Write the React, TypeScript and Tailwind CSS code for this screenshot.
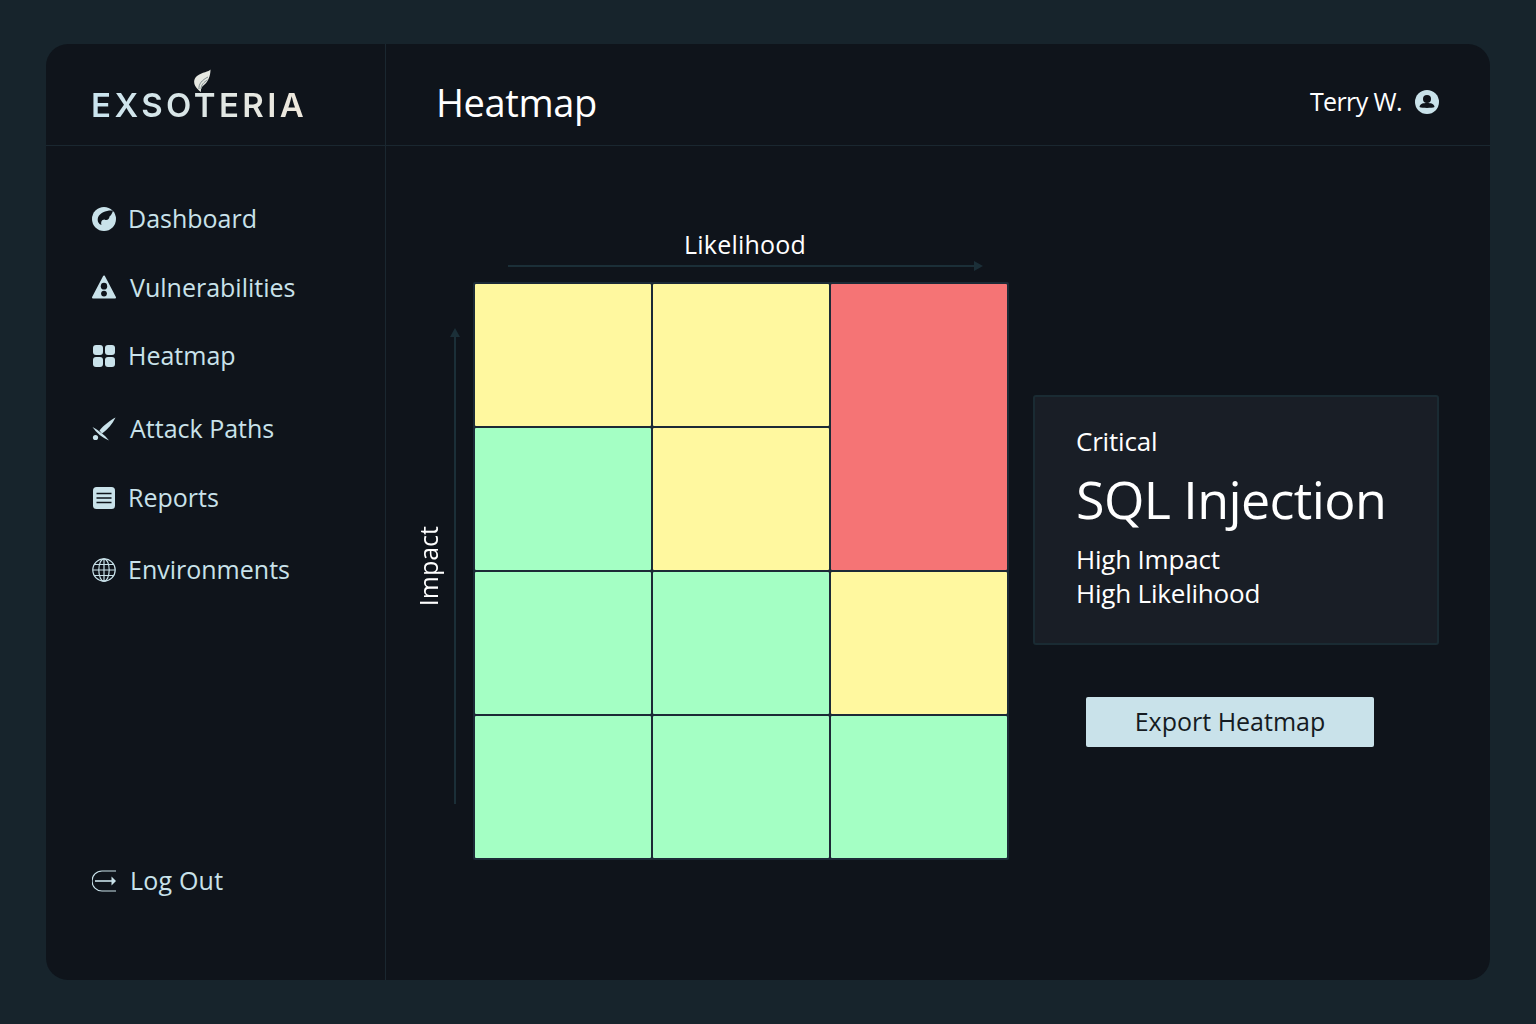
import { ReactNode } from "react";

const ICE = "#c9e2ea";
const DARK = "#0f141b";

function DashIcon() {
  return (
    <svg width="24" height="24" viewBox="0 0 24 24">
      <circle cx="12" cy="12" r="12" fill={ICE} />
      <path d="M21 3.5 C15 3 8 5 6 10.5 C5 14 6.5 17 9.5 18 C8.5 15.5 9.5 12.5 12.5 12.5 C15 14 17.5 12 17.5 9.5 C19 8.5 20.5 6 21 3.5 Z" fill={DARK} />
    </svg>
  );
}

function WarnIcon() {
  return (
    <svg width="24" height="24" viewBox="0 0 24 24" className="-mt-[2px]">
      <path d="M12 1.5 L23 22.5 H1 Z" fill={ICE} stroke={ICE} strokeWidth="2" strokeLinejoin="round" />
      <ellipse cx="12" cy="11.2" rx="3.2" ry="3.4" fill={DARK} />
      <circle cx="12" cy="18.6" r="2.9" fill={DARK} />
    </svg>
  );
}

function GridIcon() {
  return (
    <svg width="24" height="24" viewBox="0 0 24 24" fill={ICE}>
      <rect x="1" y="1" width="10" height="10" rx="3" />
      <rect x="13" y="1" width="10" height="10" rx="3" />
      <rect x="1" y="13" width="10" height="10" rx="3" />
      <rect x="13" y="13" width="10" height="10" rx="3" />
    </svg>
  );
}

function SwordIcon() {
  return (
    <svg width="24" height="24" viewBox="0 0 24 24" fill={ICE}>
      <path d="M23.5 0.5 C19 3 11.5 8 7.5 13.5 L10 16.5 C15.5 12.5 20.5 7 23.5 0.5 Z" />
      <path d="M0.5 10 C6 13 12.5 17.5 17 23.5 C10 20.5 4.5 16 0.5 10 Z" />
      <circle cx="3.5" cy="20.5" r="2.6" />
    </svg>
  );
}

function ReportIcon() {
  return (
    <svg width="24" height="24" viewBox="0 0 24 24">
      <rect x="1" y="1" width="22" height="22" rx="3.5" fill={ICE} />
      <path d="M4.5 7.5 H19.5 M4.5 12 H19.5 M4.5 16.5 H19.5" stroke={DARK} strokeWidth="1.5" />
    </svg>
  );
}

function GlobeIcon() {
  return (
    <svg width="24" height="24" viewBox="0 0 24 24" fill="none" stroke={ICE} strokeWidth="1.2">
      <circle cx="12" cy="12" r="11.2" />
      <ellipse cx="12" cy="12" rx="5.2" ry="11.2" />
      <path d="M12 0.8 V23.2 M0.8 12 H23.2 M2.4 6.5 H21.6 M2.4 17.5 H21.6" />
    </svg>
  );
}

function LogoutIcon() {
  return (
    <svg width="25" height="22" viewBox="0 0 25 22" fill="none" stroke={ICE} strokeWidth="1.2">
      <path d="M24 1 H10 A9.5 9.5 0 0 0 10 21 H24" />
      <path d="M3 11 H21" strokeWidth="1.6" />
      <path d="M19.5 6.5 L24 11 L19.5 15.5 Z" fill={ICE} stroke="none" />
    </svg>
  );
}

function UserIcon() {
  return (
    <svg width="24" height="24" viewBox="0 0 24 24">
      <circle cx="12" cy="12" r="12" fill={ICE} />
      <circle cx="12" cy="9" r="4" fill={DARK} />
      <path d="M4.5 17 C5 13.5 8 13 12 13 C16 13 19 13.5 19.5 17 C17 18.2 7 18.2 4.5 17 Z" fill={DARK} />
    </svg>
  );
}

function LeafIcon() {
  return (
    <svg width="18" height="24" viewBox="0 0 18 24" fill="none">
      <path d="M17.5 0.5 C16 3 9 3 4 7 C-0.5 10.5 0.5 17 5.5 21 C7 22.5 8 23 8 23 C7.5 20 8.5 18 11 16 C15 13 17.5 7 17.5 0.5 Z" fill="#e6e8e2" />
      <path d="M6 20 C5.5 15 9 11 15 8 M8 20 C8 16 11 13 14.5 11" stroke="#7f8d90" strokeWidth="1" />
    </svg>
  );
}

type NavItem = { label: string; icon: ReactNode; className: string };

const navItems: NavItem[] = [
  { label: "Dashboard", icon: <DashIcon />, className: "gap-[12px]" },
  { label: "Vulnerabilities", icon: <WarnIcon />, className: "mt-[29px] gap-[14px]" },
  { label: "Heatmap", icon: <GridIcon />, className: "mt-[28px] gap-[12px]" },
  { label: "Attack Paths", icon: <SwordIcon />, className: "mt-[33px] gap-[14px]" },
  { label: "Reports", icon: <ReportIcon />, className: "mt-[29px] gap-[12px]" },
  { label: "Environments", icon: <GlobeIcon />, className: "mt-[32px] gap-[12px]" },
];

const cells = [
  "bg-[#fff89f]",
  "bg-[#fff89f]",
  "row-span-2 bg-[#f57475]",
  "bg-[#a4ffc4]",
  "bg-[#fff89f]",
  "bg-[#a4ffc4]",
  "bg-[#a4ffc4]",
  "bg-[#fff89f]",
  "bg-[#a4ffc4]",
  "bg-[#a4ffc4]",
  "bg-[#a4ffc4]",
];

export default function App() {
  return (
    <div
      className="min-h-screen bg-[#17242c] px-[46px] pt-[44px] pb-[44px]"
      style={{ fontFamily: '"Open Sans", "Noto Sans", sans-serif' }}
    >
      <div className="flex h-[936px] flex-col rounded-[22px] bg-[#0f141b]">
        {/* Top bar */}
        <header className="flex h-[102px] border-b border-[#1a2730]">
          <div className="flex w-[340px] items-end border-r border-[#1a2730] pb-[22px] pl-[45px]">
            <div className="relative" style={{ fontFamily: "Inter, sans-serif" }}>
              <span className="bg-gradient-to-r from-[#c9e4ef] to-[#efe8dc] bg-clip-text text-[33px] leading-[32px] font-semibold tracking-[3.4px] text-transparent">
                EXSOTERIA
              </span>
              <span className="absolute top-[-20px] left-[102px]">
                <LeafIcon />
              </span>
            </div>
          </div>
          <div className="flex flex-1 items-center justify-between pt-[14px] pr-[51px] pl-[50px]">
            <h1 className="text-[38px] leading-none font-normal tracking-[-0.4px] text-white">Heatmap</h1>
            <div className="flex items-center gap-[13px]">
              <span className="text-[25px] tracking-[-0.6px] text-white">Terry W.</span>
              <UserIcon />
            </div>
          </div>
        </header>

        <div className="flex flex-1">
          {/* Sidebar */}
          <aside className="flex w-[340px] flex-col border-r border-[#1a2730] pt-[53px] pb-[79px] pl-[46px]">
            <nav className="flex flex-col">
              {navItems.map((item) => (
                <a key={item.label} className={`flex h-[40px] items-center text-[25px] text-[#c9e2ea] ${item.className}`}>
                  {item.icon}
                  {item.label}
                </a>
              ))}
            </nav>
            <a className="mt-auto flex h-[40px] items-center gap-[13px] text-[25px] tracking-[0.2px] text-[#c9e2ea]">
              <LogoutIcon />
              Log Out
            </a>
          </aside>

          {/* Main */}
          <main className="flex flex-1 pt-[81px] pl-[29px]">
            <div className="flex h-[633px] items-end">
              <div className="mb-[254px] w-[26px] text-[25px] leading-[26px] text-white [transform:rotate(180deg)] [writing-mode:vertical-rl]">
                Impact
              </div>
              <svg width="10" height="476" viewBox="0 0 10 476" className="mb-[56px] ml-[9px]">
                <path d="M5 8 V476" stroke="#1b2f38" strokeWidth="2" />
                <path d="M5 0 L10 9 H0 Z" fill="#1b2f38" />
              </svg>
            </div>

            <div className="ml-[13px] flex flex-col">
              <div className="pl-[8px] text-center text-[25px] leading-[34px] tracking-[0.2px] text-white">Likelihood</div>
              <svg width="475" height="10" viewBox="0 0 475 10" className="ml-[35px]">
                <path d="M0 5 H467" stroke="#1b2f38" strokeWidth="2" />
                <path d="M475 5 L466 0 V10 Z" fill="#1b2f38" />
              </svg>
              <div className="mt-[11px] grid grid-cols-[repeat(3,176px)] grid-rows-[repeat(4,142px)] gap-[2px] rounded-[2px] bg-[#1c2a36] p-[2px]">
                {cells.map((c, i) => (
                  <div key={i} className={`rounded-[1px] ${c}`} />
                ))}
              </div>
            </div>

            <div className="ml-[24px] flex flex-col">
              <section className="mt-[168px] h-[250px] w-[406px] rounded-[3px] border-2 border-[#1a2b33] bg-[#191e26] pt-[27px] pl-[41px] text-white">
                <div className="text-[26px] leading-[34px] tracking-[-0.2px]">Critical</div>
                <div className="mt-[11px] text-[52px] leading-[60px] tracking-[-0.6px]">SQL Injection</div>
                <div className="mt-[13px] text-[26px] leading-[34px] tracking-[-0.2px]">
                  High Impact
                  <br />
                  High Likelihood
                </div>
              </section>
              <button className="mt-[52px] ml-[53px] h-[50px] w-[288px] rounded-[2px] bg-[#c9e2ea] text-[25px] text-[#151b22]">
                Export Heatmap
              </button>
            </div>
          </main>
        </div>
      </div>
    </div>
  );
}
